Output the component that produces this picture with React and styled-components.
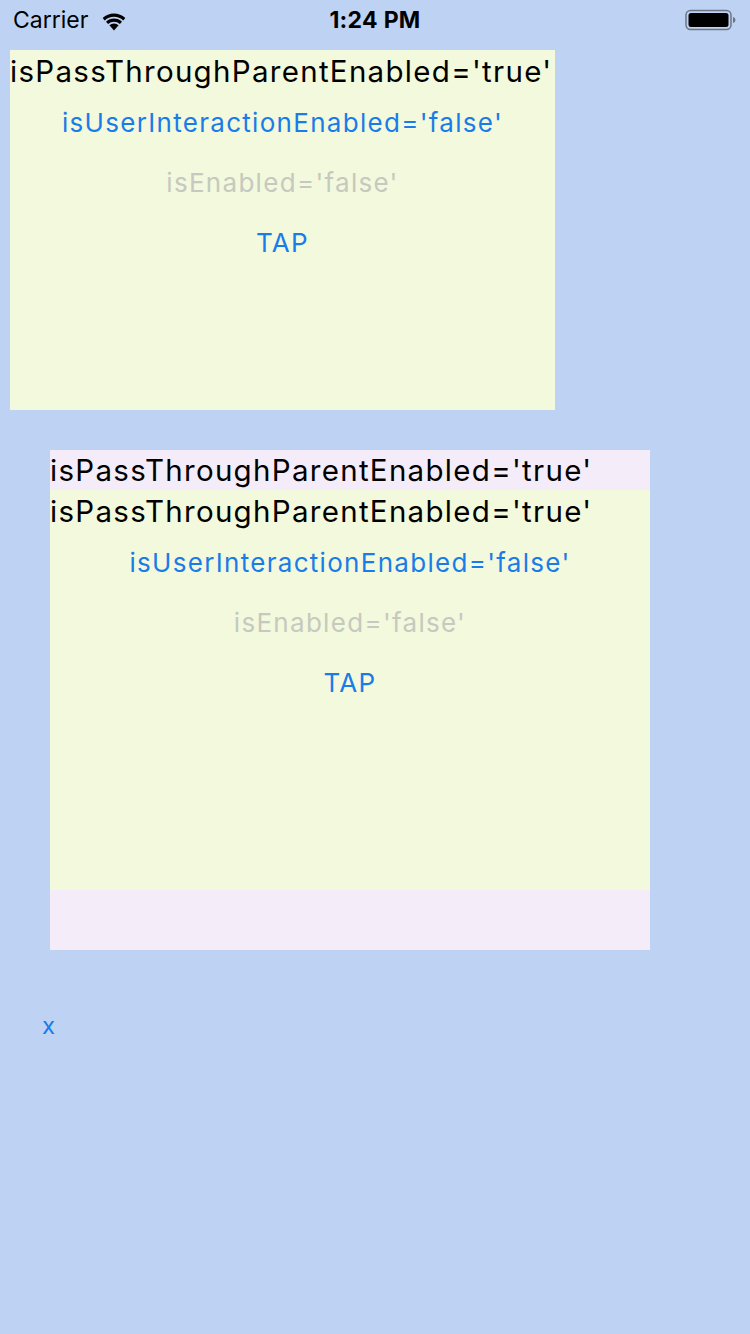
import React from 'react';
import styled, { createGlobalStyle } from 'styled-components';

const GlobalStyle = createGlobalStyle`
  html, body {
    margin: 0;
    padding: 0;
    background: #bed3f3;
  }
  body {
    font-family: Inter, "Liberation Sans", sans-serif;
    -webkit-font-smoothing: antialiased;
  }
`;

const St = {
  Screen: styled.div`
    width: 750px;
    min-height: 1334px;
    background: #bed3f3;
    display: flex;
    flex-direction: column;
  `,

  StatusBar: styled.div`
    height: 40px;
    display: grid;
    grid-template-columns: 1fr auto 1fr;
    align-items: center;
    padding: 0 13px 0 13px;
    font-size: 23px;
    color: #000;
  `,

  Carrier: styled.div`
    display: flex;
    align-items: center;
    gap: 12px;
  `,

  Time: styled.div`
    font-weight: 700;
    font-size: 23px;
    letter-spacing: 0.3px;
  `,

  BatteryWrap: styled.div`
    display: flex;
    justify-content: flex-end;
  `,

  Content: styled.div`
    display: flex;
    flex-direction: column;
    padding-top: 10px;
  `,

  Panel: styled.div`
    margin-left: ${(p) => p.$left}px;
    width: ${(p) => p.$width}px;
    height: ${(p) => p.$height}px;
    background: ${(p) => p.$bg};
    display: flex;
    flex-direction: column;
    flex-shrink: 0;
  `,

  Title: styled.div`
    height: ${(p) => p.$height || 42}px;
    font-size: 29.5px;
    line-height: ${(p) => p.$height || 42}px;
    color: #000;
    white-space: nowrap;
    letter-spacing: 1.3px;
  `,

  ButtonRow: styled.div`
    height: 60px;
    display: flex;
    align-items: center;
    justify-content: center;
    font-size: 26px;
    letter-spacing: 1.3px;
    color: ${(p) => (p.$disabled ? '#c6c9bf' : '#1a7ce9')};
    white-space: nowrap;
  `,

  CloseRow: styled.div`
    margin-top: 59px;
    padding-left: 42px;
    font-size: 24px;
    color: #1a7ce9;
    line-height: 34px;
  `
};

const Wifi = () => (
  <svg width="28" height="21" viewBox="0 0 26 20">
    <path d="M13 19.5 L8.6 14.6 A6.4 6.4 0 0 1 17.4 14.6 Z" fill="#000" />
    <path d="M5.4 11.2 A11 11 0 0 1 20.6 11.2 L18.6 13.4 A8.1 8.1 0 0 0 7.4 13.4 Z" fill="#000" />
    <path d="M2.2 7.7 A15.7 15.7 0 0 1 23.8 7.7 L21.8 9.9 A12.8 12.8 0 0 0 4.2 9.9 Z" fill="#000" />
  </svg>
);

const Battery = () => (
  <svg width="52" height="22" viewBox="0 0 52 22">
    <rect x="1" y="1.5" width="45" height="19" rx="4.5" fill="none" stroke="#6c7585" strokeWidth="1.5" />
    <rect x="3.5" y="4" width="40" height="14" rx="2.5" fill="#000" />
    <path d="M48 8 Q50.5 8.5 50.5 11 Q50.5 13.5 48 14 Z" fill="#6c7585" />
  </svg>
);

const Box = ({ left, width, height }) => (
  <St.Panel $left={left} $width={width} $height={height} $bg="#f3f9dc">
    <St.Title>isPassThroughParentEnabled='true'</St.Title>
    <St.ButtonRow>isUserInteractionEnabled='false'</St.ButtonRow>
    <St.ButtonRow $disabled>isEnabled='false'</St.ButtonRow>
    <St.ButtonRow>TAP</St.ButtonRow>
  </St.Panel>
);

const App = () => {
  return (
    <St.Screen>
      <GlobalStyle />
      <St.StatusBar>
        <St.Carrier>
          Carrier
          <Wifi />
        </St.Carrier>
        <St.Time>1:24 PM</St.Time>
        <St.BatteryWrap>
          <Battery />
        </St.BatteryWrap>
      </St.StatusBar>

      <St.Content>
        <Box left={10} width={545} height={360} />

        <St.Panel $left={50} $width={600} $height={500} $bg="#f4ecf8" style={{ marginTop: 40 }}>
          <St.Title $height={40}>isPassThroughParentEnabled='true'</St.Title>
          <Box left={0} width={600} height={400} />
        </St.Panel>

        <St.CloseRow>x</St.CloseRow>
      </St.Content>
    </St.Screen>
  );
};

export default App;
